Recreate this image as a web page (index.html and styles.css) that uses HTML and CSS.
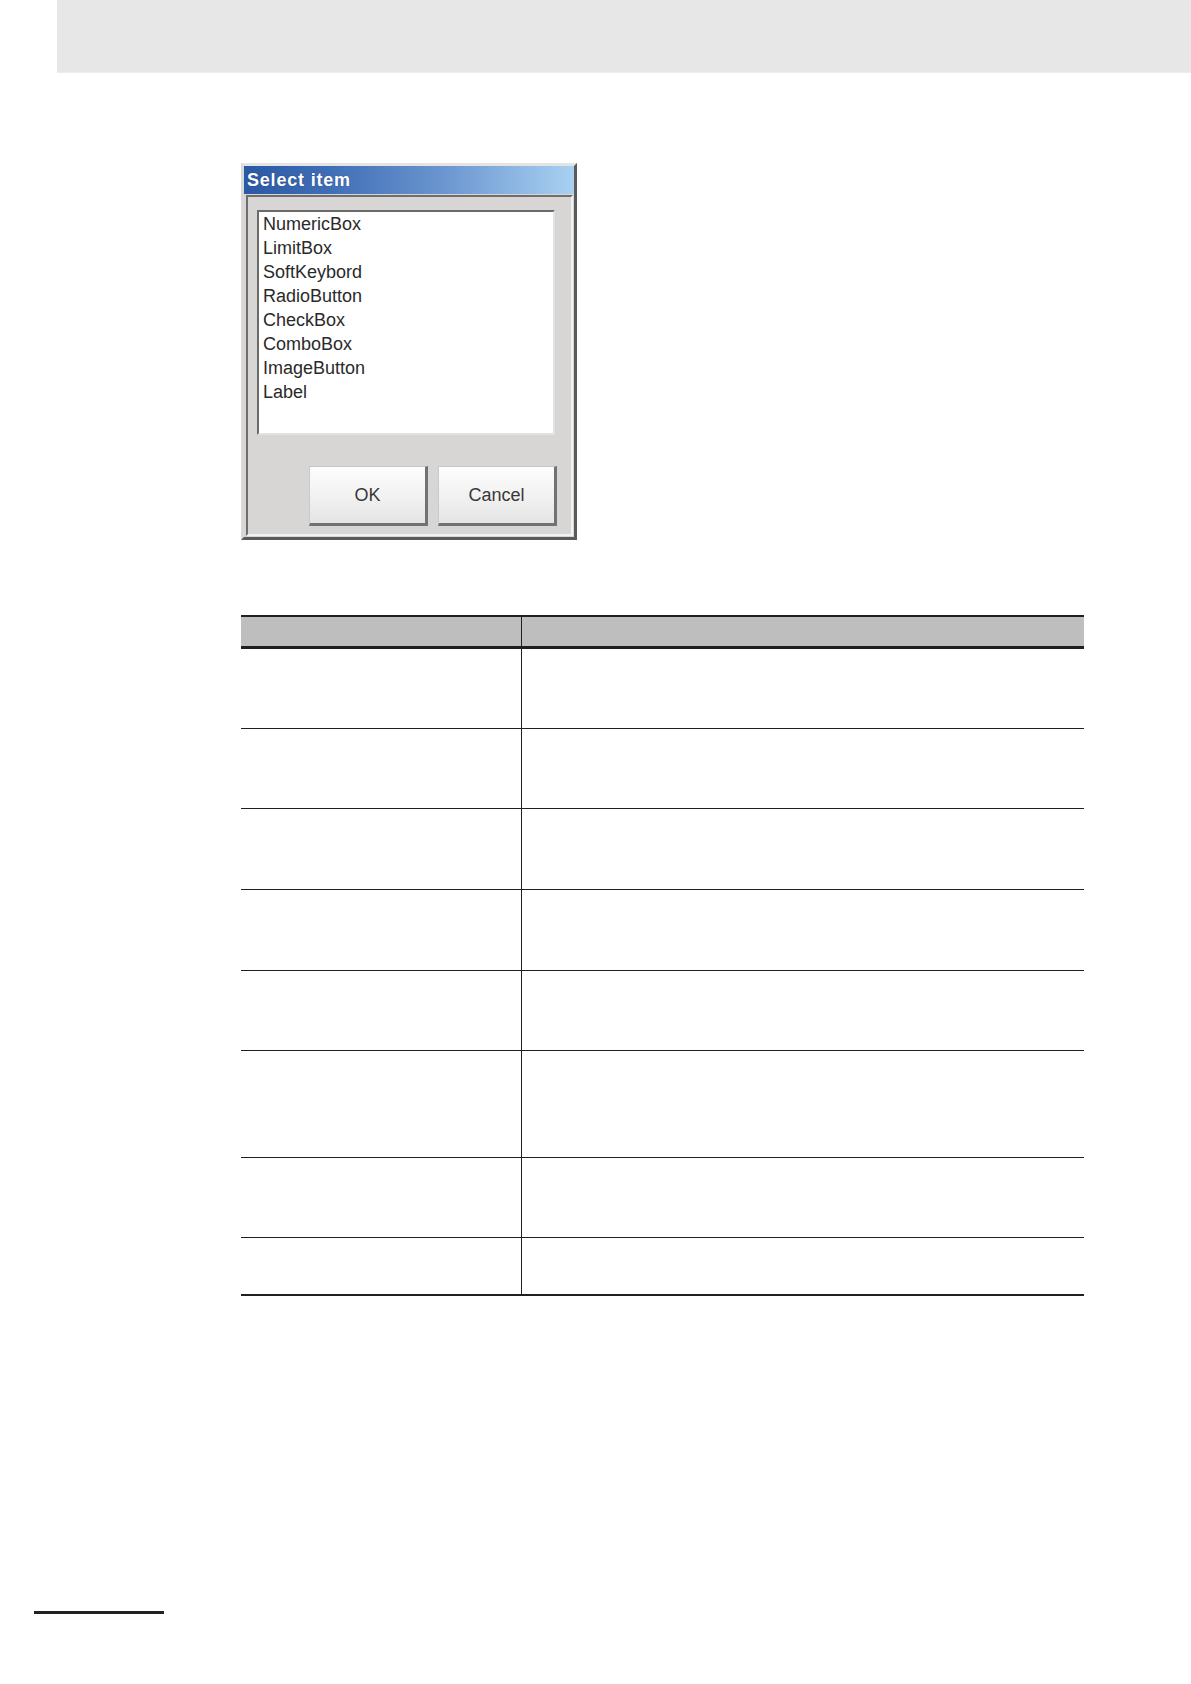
FILE: index.html
```html
<!DOCTYPE html>
<html lang="en">
<head>
<meta charset="utf-8">
<title>Select item</title>
<link rel="stylesheet" href="styles.css">
</head>
<body>
<div class="topbar"></div>
<main class="content">
  <div class="dialog">
    <div class="dialog-title">Select item</div>
    <div class="dialog-body">
      <div class="panel">
        <ul class="listbox">
          <li>NumericBox</li>
          <li>LimitBox</li>
          <li>SoftKeybord</li>
          <li>RadioButton</li>
          <li>CheckBox</li>
          <li>ComboBox</li>
          <li>ImageButton</li>
          <li>Label</li>
        </ul>
        <div class="buttons">
          <button class="btn">OK</button>
          <button class="btn">Cancel</button>
        </div>
      </div>
    </div>
  </div>

  <div class="table">
    <div class="row head"><div class="cell left"></div><div class="cell"></div></div>
    <div class="row r80"><div class="cell left"></div><div class="cell"></div></div>
    <div class="row r80"><div class="cell left"></div><div class="cell"></div></div>
    <div class="row r81"><div class="cell left"></div><div class="cell"></div></div>
    <div class="row r81"><div class="cell left"></div><div class="cell"></div></div>
    <div class="row r80"><div class="cell left"></div><div class="cell"></div></div>
    <div class="row r107"><div class="cell left"></div><div class="cell"></div></div>
    <div class="row r80"><div class="cell left"></div><div class="cell"></div></div>
    <div class="row last"><div class="cell left"></div><div class="cell"></div></div>
  </div>
</main>
<div class="footer-rule"></div>
</body>
</html>
```

FILE: styles.css
```css
html, body {
  margin: 0;
  padding: 0;
  background: #ffffff;
  font-family: "Liberation Sans", Arial, sans-serif;
}

.topbar {
  margin-left: 57px;
  height: 73px;
  background: #e7e7e7;
  border-bottom: 1px solid #ededed;
  box-sizing: border-box;
}

.content {
  margin-left: 241px;
}

/* dialog */
.dialog {
  margin-top: 90px;
  width: 336px;
  height: 377px;
  box-sizing: border-box;
  border: 3px solid;
  border-color: #e4e4e4 #5a5a5a #5a5a5a #d8d8d8;
  background: #d7d6d4;
  display: flex;
  flex-direction: column;
}

.dialog-title {
  height: 28px;
  flex: 0 0 28px;
  background: linear-gradient(to right, #2a58a4 0%, #3f6db5 25%, #6a95cf 60%, #a9d1f2 100%);
  color: #ffffff;
  font-weight: bold;
  font-size: 18px;
  letter-spacing: 0.8px;
  line-height: 28px;
  padding-left: 3px;
  text-shadow: 0 0 1px rgba(20, 40, 90, 0.7);
}

.dialog-body {
  flex: 1;
  padding: 1px 1px 1px 2px;
  display: flex;
}

.panel {
  flex: 1;
  border: 2px solid;
  border-color: #6e6e6e #f2f2f2 #f2f2f2 #6e6e6e;
  padding: 13px 16px 8px 9px;
  display: flex;
  flex-direction: column;
}

.listbox {
  list-style: none;
  margin: 0;
  width: 298px;
  height: 225px;
  box-sizing: border-box;
  background: #ffffff;
  border: 2px solid;
  border-color: #6a6a6a #e2e2e2 #e2e2e2 #6a6a6a;
  padding: 0 0 0 4px;
  font-size: 18px;
  line-height: 24px;
  color: #2a2a2a;
}

.buttons {
  margin-top: 31px;
  margin-right: -2px;
  display: flex;
  justify-content: flex-end;
  gap: 10px;
}

.btn {
  width: 119px;
  height: 60px;
  box-sizing: border-box;
  margin: 0;
  padding: 0;
  border-style: solid;
  border-width: 1px 3px 3px 1px;
  border-color: #c4c4c4 #727272 #727272 #cacaca;
  background: linear-gradient(to bottom, #fdfdfd 0%, #f2f2f2 50%, #e4e4e4 100%);
  font-family: "Liberation Sans", Arial, sans-serif;
  font-size: 18px;
  color: #383838;
}

/* table */
.table {
  margin-top: 75px;
  width: 843px;
  border-top: 2px solid #231f20;
  border-bottom: 2px solid #231f20;
}

.row {
  display: grid;
  grid-template-columns: 281px 562px;
  box-sizing: border-box;
  border-bottom: 1px solid #231f20;
}

.cell.left {
  border-right: 1px solid #231f20;
}

.row.head {
  height: 32px;
  background: #bebebe;
  border-bottom: 3px solid #231f20;
}

.row.r80 { height: 80px; }
.row.r81 { height: 81px; }
.row.r107 { height: 107px; }

.row.last {
  height: 56px;
  border-bottom: none;
}

.footer-rule {
  margin-top: 315px;
  margin-left: 34px;
  width: 130px;
  height: 3px;
  background: #222222;
}
```
